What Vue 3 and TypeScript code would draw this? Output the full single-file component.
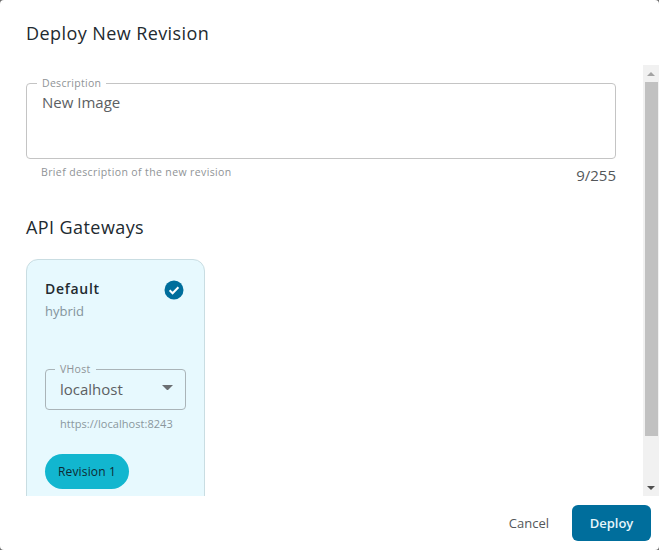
<script setup lang="ts">
const title = 'Deploy New Revision'
</script>

<template>
  <div class="dialog">
    <h2 class="title">{{ title }}</h2>
    <div class="body">
      <div class="content">
        <fieldset class="desc">
          <legend>Description</legend>
          <div class="desc-value">New Image</div>
        </fieldset>
        <div class="help-row">
          <span class="help">Brief description of the new revision</span>
          <span class="count">9/255</span>
        </div>
        <h3 class="section">API Gateways</h3>
        <div class="card">
          <div class="card-head">
            <div>
              <div class="card-name">Default</div>
              <div class="card-type">hybrid</div>
            </div>
            <svg class="check" viewBox="0 0 20 20" width="20" height="20">
              <circle cx="10" cy="10" r="9.5" fill="#006e9c" />
              <path d="M5.6 10.3l3 3 5.8-6" fill="none" stroke="#fff" stroke-width="2" />
            </svg>
          </div>
          <fieldset class="vhost">
            <legend>VHost</legend>
            <div class="vhost-row">
              <span>localhost</span>
              <svg class="caret" viewBox="0 0 10 5" width="11" height="5.5"><path d="M0 0h10L5 5z" fill="#6b6f72" /></svg>
            </div>
          </fieldset>
          <div class="url">https://localhost:8243</div>
          <div class="pill">Revision 1</div>
        </div>
      </div>
      <div class="scrollbar">
        <svg class="arrow" viewBox="0 0 8 4" width="8" height="4"><path d="M0 4h8L4 0z" fill="#a3a3a3" /></svg>
        <div class="thumb"></div>
        <div class="track"></div>
        <svg class="arrow" viewBox="0 0 8 4" width="8" height="4"><path d="M0 0h8L4 4z" fill="#505050" /></svg>
      </div>
    </div>
    <div class="actions">
      <button class="cancel" type="button">Cancel</button>
      <button class="deploy" type="button">Deploy</button>
    </div>
  </div>
</template>

<style>
html, body { margin: 0; background: #6b6b6b; }
</style>

<style scoped>
.dialog {
  width: 659px;
  height: 550px;
  background: #fff;
  border-radius: 4px;
  display: flex;
  flex-direction: column;
  overflow: hidden;
  font-family: "Open Sans", sans-serif;
  color: #222;
}
.title {
  margin: 0;
  padding: 20px 26px 0;
  height: 65px;
  flex: none;
  box-sizing: border-box;
  font-size: 18px;
  line-height: 26px;
  font-weight: 400;
  letter-spacing: 0.42px;
  color: #222a30;
}
.body {
  height: 431px;
  flex: none;
  display: flex;
}
.content {
  flex: 1;
  min-width: 0;
  overflow: hidden;
  padding: 11px 27px 0 26px;
}
fieldset {
  margin: 0;
  min-width: 0;
}
.desc {
  height: 83px;
  box-sizing: border-box;
  border: 1px solid #c4c4c4;
  border-radius: 4px;
  padding: 0 15px;
}
legend {
  padding: 0 5px;
  margin-left: -5px;
  font-size: 10.5px;
  line-height: 14px;
  letter-spacing: 0.3px;
  color: #8f9396;
}
.desc-value {
  font-size: 15px;
  line-height: 20px;
  color: #5c6063;
  margin-top: 2px;
}
.help-row {
  display: flex;
  justify-content: space-between;
  padding-left: 15px;
  height: 55px;
}
.help {
  font-size: 10.5px;
  line-height: 14px;
  letter-spacing: 0.38px;
  color: #8f9396;
  margin-top: 6px;
}
.count {
  font-size: 15px;
  line-height: 18px;
  color: #53575a;
  margin-top: 7px;
}
.section {
  margin: 0;
  font-size: 18px;
  line-height: 26px;
  font-weight: 400;
  letter-spacing: 0.42px;
  color: #222a30;
}
.card {
  margin-top: 19px;
  width: 179px;
  height: 300px;
  box-sizing: border-box;
  background: #e7f9fe;
  border: 1px solid #c9dde2;
  border-radius: 12px;
  padding: 19px 18px;
}
.card-head {
  display: flex;
  justify-content: space-between;
  align-items: flex-start;
}
.card-name {
  font-size: 14px;
  line-height: 20px;
  font-weight: 600;
  letter-spacing: 0.7px;
  color: #222a30;
}
.card-type {
  font-size: 13px;
  line-height: 18px;
  margin-top: 3px;
  color: #84949c;
}
.check { margin: 1px 2px 0 0; }
.vhost {
  margin-top: 42px;
  height: 48px;
  width: 141px;
  box-sizing: border-box;
  border: 1px solid #aab4b8;
  border-radius: 4px;
  padding: 0 14px;
}
.vhost-row {
  display: flex;
  justify-content: space-between;
  align-items: center;
  font-size: 15px;
  line-height: 22px;
  color: #5c6063;
  margin-top: 2px;
}
.caret { margin: 0 -2px 3px 0; }
.url {
  font-size: 11px;
  line-height: 14px;
  margin-top: 7px;
  padding-left: 15px;
  color: #8a979d;
  letter-spacing: 0.05px;
}
.pill {
  margin-top: 23px;
  width: 84px;
  height: 35px;
  border-radius: 18px;
  background: #12b6cf;
  font-size: 12px;
  line-height: 35px;
  text-align: center;
  letter-spacing: 0.15px;
  color: #0e2a33;
}
.scrollbar {
  width: 16px;
  flex: none;
  background: #f1f1f1;
  display: flex;
  flex-direction: column;
  align-items: center;
}
.arrow { flex: none; margin: 7px 0 6px; }
.thumb {
  width: 13px;
  height: 354px;
  margin-left: 1px;
  background: #c1c1c1;
  flex: none;
}
.track { flex: 1; }
.actions {
  flex: 1;
  display: flex;
  align-items: center;
  justify-content: flex-end;
  padding: 0 8px 0 0;
  gap: 23px;
}
button {
  font-family: inherit;
  border: 0;
  cursor: pointer;
  font-size: 13px;
}
.cancel {
  background: none;
  color: #53575a;
  padding: 0;
}
.deploy {
  width: 79px;
  height: 36px;
  border-radius: 6px;
  background: #006e9c;
  color: #e6f6fb;
  font-weight: 600;
}
</style>
